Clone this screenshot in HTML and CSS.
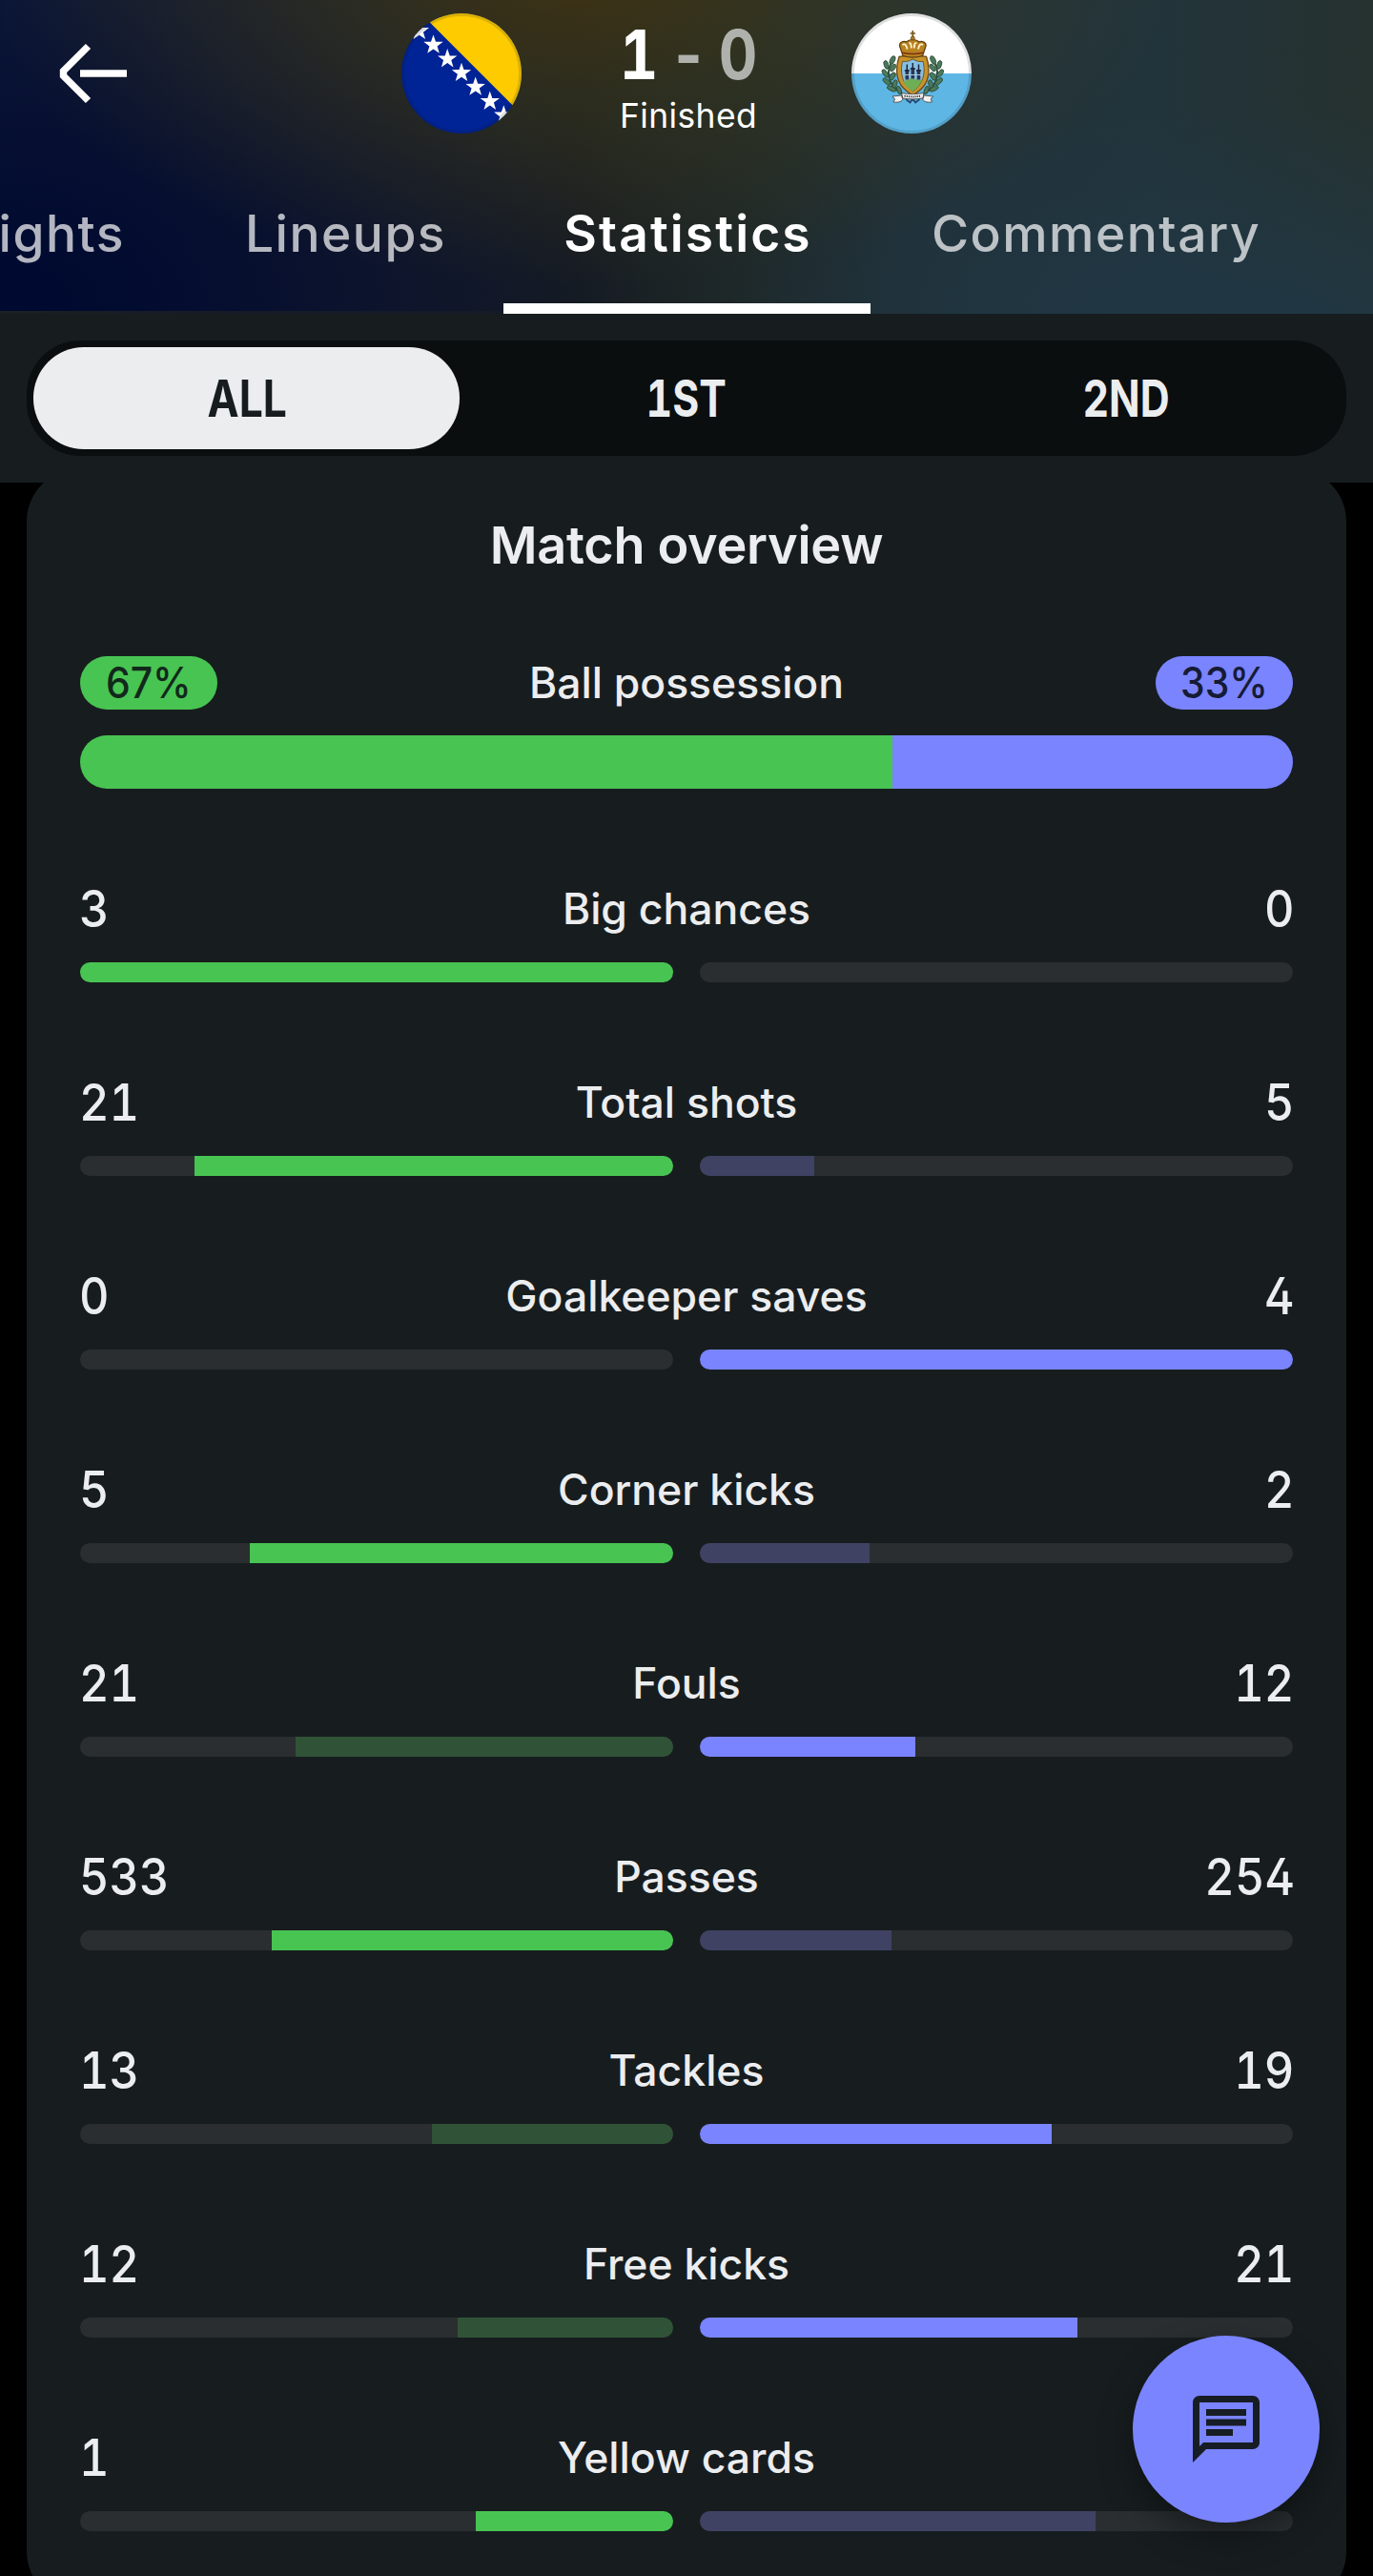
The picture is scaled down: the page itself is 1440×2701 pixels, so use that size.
FILE: index.html
```html
<!DOCTYPE html>
<html lang="en">
<head>
<meta charset="utf-8">
<title>Match statistics</title>
<link rel="stylesheet" href="styles.css">
</head>
<body>
<header class="header">
  <div class="scorebar">
    <svg class="back" viewBox="0 0 80 72" width="80" height="72" fill="none" stroke="#fff"><path d="M37.5 7.5 11.5 33.5v5l26 26" stroke-width="7.4"/><path d="M29 36h49" stroke-width="7.6"/></svg>
    <svg class="flag" viewBox="0 0 126 126">
      <defs>
        <clipPath id="disc"><circle cx="63" cy="63" r="63"/></clipPath>
        <path id="star" d="M0-10.6 2.5-3.3 10.2-3.2 4.1 1.4 6.3 8.7 0 4.4-6.3 8.7-4.1 1.4-10.2-3.2-2.5-3.3z" fill="#fff"/>
      </defs>
      <g clip-path="url(#disc)">
        <path d="M0 0h126v126H0z" fill="#002395"/>
        <path d="M20.3 0H126v105.7z" fill="#fecb00"/>
        <use href="#star" x="18.8" y="18.3"/><use href="#star" x="33.5" y="33"/><use href="#star" x="48.2" y="47.7"/><use href="#star" x="63" y="62.4"/><use href="#star" x="77.7" y="77.1"/><use href="#star" x="92.8" y="92.2"/><use href="#star" x="107.3" y="106.8"/>
      </g>
      <circle cx="63" cy="63" r="61.5" fill="none" stroke="#171d1f" stroke-opacity=".15" stroke-width="3"/>
    </svg>
    <div class="result">
      <div class="score"><span class="win">1</span><span class="dash">-</span><span>0</span></div>
      <div class="status">Finished</div>
    </div>
    <svg class="flag" viewBox="0 0 126 126">
      <g clip-path="url(#disc)">
        <path d="M0 0h126v63H0z" fill="#fff"/>
        <path d="M0 63h126v63H0z" fill="#5eb6e4"/>
      </g>
      <g fill="none" stroke="#31543e" stroke-width="2"><path d="M45 48c-9 9-9 27 8 36M84 48c9 9 9 27-8 36"/></g>
      <g fill="#4a7a5c" stroke="#2a4433" stroke-width=".8">
        <g id="wreath">
          <ellipse cx="43" cy="49" rx="2.4" ry="4.6" transform="rotate(25 43 49)"/>
          <ellipse cx="36.5" cy="54" rx="2.3" ry="4.6" transform="rotate(-18 36.5 54)"/>
          <ellipse cx="43.5" cy="57" rx="2.3" ry="4.4" transform="rotate(35 43.5 57)"/>
          <ellipse cx="35.5" cy="63" rx="2.3" ry="4.8" transform="rotate(-35 35.5 63)"/>
          <ellipse cx="43" cy="66" rx="2.4" ry="4.6" transform="rotate(30 43 66)"/>
          <ellipse cx="37" cy="71.5" rx="2.3" ry="4.8" transform="rotate(-50 37 71.5)"/>
          <ellipse cx="45.5" cy="74" rx="2.3" ry="4.4" transform="rotate(15 45.5 74)"/>
          <ellipse cx="42" cy="79" rx="2.2" ry="5" transform="rotate(-65 42 79)"/>
          <ellipse cx="50" cy="80.5" rx="2.2" ry="4.4" transform="rotate(-20 50 80.5)"/>
        </g>
        <use href="#wreath" transform="matrix(-1 0 0 1 128.6 0)"/>
      </g>
      <path d="M50 45.5c4-1 9 0 14.3-3 5.300 3 10.300 2 14.300 3 1.500 4 2.400 8 2.400 14 0 13-6 20-16.700 26.500C53.600 79.500 47.600 72.500 47.600 59.500c0-6 1-10 2.400-14z" fill="#c8932c" stroke="#6b4612" stroke-width="1.300"/>
      <path d="M53.500 50.500c4 .5 7-.5 10.800-2.500 3.800 2 6.800 3 10.800 2.500 1.500 6 1.500 13-.8 19-2 5-5.500 9-10 12.500-4.500-3.500-8-7.500-10-12.500-2.300-6-2.300-13-.8-19z" fill="#86bfe4" stroke="#5a4212" stroke-width=".8"/>
      <path d="M54 71.500c4-1.500 6-1.500 8-3.500 4 1 8 2 12.300 1.500-2 5-5.500 9-10 12.500-4.500-3-8-6.500-10.300-10.500z" fill="#6eae55"/>
      <path d="M56.500 59h3.600v10.500h-3.600zM62.500 57h3.600v11.500h-3.600zM68.700 59h3.600v10.500h-3.600z" fill="#2a3650"/>
      <path d="M55.800 60h5M61.800 58h5M68 60h5M58.300 53.500V60M64.300 52v6M70.500 53.500V60" stroke="#1c2438" stroke-width="1.500"/>
      <path d="M55.500 64.500h17.500" stroke="#a9cbe0" stroke-width="1"/>
      <path d="M54 44.500 50.500 34c-.5-4 4.500-5.500 7-4 2-2 4-2.500 6.800-2.500s4.800.5 6.800 2.500c2.500-1.500 7.500 0 7 4l-3.500 10.500c-6 1.800-14.600 1.800-20.600 0z" fill="#b98220" stroke="#5c3b0c" stroke-width="1.200"/>
      <path d="M53.500 33c2-1.500 4-.5 5 4.500M75 33c-2-1.500-4-.5-5 4.500M60.300 31.500c1.500-1.500 2.500 1 2.500 5M68.300 31.500c-1.500-1.500-2.500 1-2.500 5" fill="none" stroke="#fff3cf" stroke-width="1.800"/>
      <path d="M53.500 41.200c6 1.500 15.600 1.500 21.600 0" fill="none" stroke="#7a2f14" stroke-width="1.500"/>
      <path d="M64.300 18v9M61.600 21h5.400" stroke="#70521c" stroke-width="1.600"/><circle cx="64.300" cy="26" r="2" fill="#b07c1e" stroke="#5c3b0c" stroke-width=".7"/>
      <path d="m57 90 4.500 3.500 2.800-4 2.800 4 4.500-3.500" fill="none" stroke="#26466e" stroke-width="1.800"/>
      <path d="M53 83.500c7 1.500 15.600 1.500 22.600 0v5.300c-7 1.500-15.600 1.500-22.600 0zM53 86l-10 1 2.500 3-1.500 3c4 .5 8 .3 10-3zM75.600 86l10 1-2.500 3 1.500 3c-4 .5-8 .3-10-3z" fill="#f3f3f1" stroke="#4a4a48" stroke-width=".9"/>
      <path d="M55.500 86.500c6 1.200 11.600 1.200 17.600 0" fill="none" stroke="#3a3a3a" stroke-width="2" stroke-dasharray="1.200 1"/>
      <circle cx="63" cy="63" r="61.500" fill="none" stroke="#171d1f" stroke-opacity=".14" stroke-width="3"/>
    </svg>
  </div>
  <nav class="tabs">
    <a class="tab tab-highlights">Highlights</a>
    <a class="tab tab-lineups">Lineups</a>
    <a class="tab tab-statistics active">Statistics</a>
    <a class="tab tab-commentary">Commentary</a>
  </nav>
</header>

<div class="subheader">
  <div class="segments">
    <div class="segment selected"><span>ALL</span></div>
    <div class="segment"><span>1ST</span></div>
    <div class="segment"><span>2ND</span></div>
  </div>
</div>

<main class="card">
  <h2 class="title">Match overview</h2>
  <section class="possession">
    <div class="head"><span class="pill home"><b>67%</b></span><span class="label">Ball possession</span><span class="pill away"><b>33%</b></span></div>
    <div class="share"><i class="home" style="width:67%"></i><i class="away" style="width:33%"></i></div>
  </section>
  <section class="stat">
    <div class="head"><span class="value">3</span><span class="label">Big chances</span><span class="value">0</span></div>
    <div class="bars"><div class="track left"><i class="home" style="width:100%"></i></div><div class="track"></div></div>
  </section>
  <section class="stat">
    <div class="head"><span class="value">21</span><span class="label">Total shots</span><span class="value">5</span></div>
    <div class="bars"><div class="track left"><i class="home" style="width:80.77%"></i></div><div class="track"><i class="away dim" style="width:19.23%"></i></div></div>
  </section>
  <section class="stat">
    <div class="head"><span class="value">0</span><span class="label">Goalkeeper saves</span><span class="value">4</span></div>
    <div class="bars"><div class="track left"></div><div class="track"><i class="away" style="width:100%"></i></div></div>
  </section>
  <section class="stat">
    <div class="head"><span class="value">5</span><span class="label">Corner kicks</span><span class="value">2</span></div>
    <div class="bars"><div class="track left"><i class="home" style="width:71.43%"></i></div><div class="track"><i class="away dim" style="width:28.57%"></i></div></div>
  </section>
  <section class="stat">
    <div class="head"><span class="value">21</span><span class="label">Fouls</span><span class="value">12</span></div>
    <div class="bars"><div class="track left"><i class="home dim" style="width:63.64%"></i></div><div class="track"><i class="away" style="width:36.36%"></i></div></div>
  </section>
  <section class="stat">
    <div class="head"><span class="value">533</span><span class="label">Passes</span><span class="value">254</span></div>
    <div class="bars"><div class="track left"><i class="home" style="width:67.73%"></i></div><div class="track"><i class="away dim" style="width:32.27%"></i></div></div>
  </section>
  <section class="stat">
    <div class="head"><span class="value">13</span><span class="label">Tackles</span><span class="value">19</span></div>
    <div class="bars"><div class="track left"><i class="home dim" style="width:40.63%"></i></div><div class="track"><i class="away" style="width:59.37%"></i></div></div>
  </section>
  <section class="stat">
    <div class="head"><span class="value">12</span><span class="label">Free kicks</span><span class="value">21</span></div>
    <div class="bars"><div class="track left"><i class="home dim" style="width:36.36%"></i></div><div class="track"><i class="away" style="width:63.64%"></i></div></div>
  </section>
  <section class="stat">
    <div class="head"><span class="value">1</span><span class="label">Yellow cards</span><span class="value">2</span></div>
    <div class="bars"><div class="track left"><i class="home" style="width:33.33%"></i></div><div class="track"><i class="away dim" style="width:66.67%"></i></div></div>
  </section>
</main>

<button class="fab" aria-label="Chat">
  <svg viewBox="0 0 24 24" width="84" height="84" fill="#171d24"><path d="M4 4h16v12H5.170L4 17.170V4m0-2c-1.100 0-1.990.9-1.990 2L2 22l4-4h14c1.100 0 2-.9 2-2V4c0-1.100-.9-2-2-2H4zm2 10h8v2H6v-2zm0-3h12v2H6V9zm0-3h12v2H6V6z"/></svg>
</button>
</body>
</html>
```
FILE: styles.css
```css
* { box-sizing: border-box; }
html, body { height: 2701px; overflow: hidden; }
body {
  position: relative;
  margin: 0;
  background: #000;
  color: #ecedef;
  font-family: Inter, "Liberation Sans", sans-serif;
}

/* Header */
.header {
  position: relative;
  z-index: 2;
  height: 329px;
  overflow: hidden;
  background:
    linear-gradient(90deg, #1c2023, rgba(28, 32, 35, 0) 60%) bottom / 100% 3px no-repeat,
    radial-gradient(ellipse 620px 330px at 610px -30px, rgba(72, 56, 16, .8), rgba(64, 60, 26, .5) 40%, rgba(50, 50, 36, 0)),
    radial-gradient(ellipse 680px 460px at 0 329px, #000a30 10%, rgba(2, 11, 46, .7) 45%, rgba(8, 16, 44, 0)),
    radial-gradient(ellipse 600px 240px at 1340px 350px, rgba(31, 56, 72, .85), rgba(31, 54, 66, 0)),
    linear-gradient(90deg, #101c3c 0, #181e2e 22%, #181d22 42%, #1e2829 54%, #21323a 68%, #22343b 84%, #26322f 100%);
}
.scorebar {
  display: flex;
  align-items: center;
  height: 160px;
  padding: 0 0 6px 55px;
}
.back { margin-right: 286px; }
.flag { width: 126px; height: 126px; }
.result { width: 346px; padding: 12px 0 0 4px; }
.score {
  display: grid;
  grid-template-columns: 36px 62px 36px;
  column-gap: 3px;
  justify-content: center;
  height: 60px;
  color: #afb2ac;
  font-size: 71.500px;
  font-weight: 700;
  font-feature-settings: "tnum";
  line-height: 60px;
}
.score span { display: flex; justify-content: center; transform: scaleX(.88); }
.score .win { color: #fff; }
.status { margin-top: 17px; color: #fff; font-size: 35.400px; letter-spacing: .4px; line-height: 36px; text-align: center; }

.tabs { display: flex; height: 169px; margin-left: -205px; }
.tab {
  position: relative;
  flex: none;
  padding-left: 2px;
  color: rgba(255, 255, 255, .7);
  font-size: 53.300px;
  font-weight: 500;
  letter-spacing: 1.500px;
  line-height: 169px;
  text-align: center;
}
.tab-highlights { width: 400px; padding-right: 64px; text-align: right; }
.tab-lineups { width: 333px; }
.tab-statistics { width: 385px; }
.tab-commentary { width: 471px; }
.tab.active { color: #fff; font-weight: 600; letter-spacing: 2.100px; }
.tab.active::after { content: ""; position: absolute; left: 0; right: 0; bottom: 0; height: 11px; background: #fff; }

/* Period switch */
.subheader { position: relative; z-index: 2; height: 177px; padding: 28px; background: #171d1f; }
.segments {
  display: grid;
  grid-template-columns: repeat(3, 1fr);
  column-gap: 14px;
  height: 121px;
  padding: 7px;
  border-radius: 56px;
  background: #0a0e0f;
}
.segment { border-radius: 53px; font-size: 53.500px; font-weight: 700; font-feature-settings: "tnum"; line-height: 107px; text-align: center; }
.segment span { display: inline-block; transform: scaleX(.8); }
.segment.selected span { transform: translateX(1px) scaleX(.83); }
.selected { background: #ecedef; color: #171d1f; }

/* Card */
.card {
  height: 2240px;
  margin: -15px 28px 0;
  padding: 51px 56px 0;
  border-radius: 56px;
  background: #171d1f;
}
.title { margin: 0 0 86px; font-size: 54px; font-weight: 600; letter-spacing: -.3px; line-height: 60px; text-align: center; }
.head { display: grid; grid-template-columns: 1fr auto 1fr; align-items: center; height: 56px; }
.label { font-size: 44.500px; font-weight: 500; line-height: 56px; }
.head > :last-child { justify-self: end; }

.home { background: #48c452; }
.away { background: #7a84ff; }
.home.dim { background: #305337; }
.away.dim { background: #404263; }

.pill { display: flex; justify-content: center; width: 144px; height: 56px; border-radius: 28px; color: #12281b; font-size: 44.500px; line-height: 56px; }
.pill.away { color: #161b35; }
.pill b { font-weight: 550; transform: scaleX(.92); }
.share { display: flex; height: 56px; margin-top: 27px; overflow: hidden; border-radius: 28px; }

.stat { margin-top: 98px; }
.value { margin: 0 -1.500px; font-size: 53.500px; font-weight: 500; font-feature-settings: "tnum", "cv02"; line-height: 56px; transform: scaleX(.91); transform-origin: left; }
.value:last-child { transform-origin: right; }
.bars { display: grid; grid-template-columns: 1fr 1fr; column-gap: 28px; margin-top: 28px; }
.track { display: flex; height: 21px; overflow: hidden; border-radius: 10.500px; background: #2a2e30; }
.track.left { justify-content: flex-end; }

.fab {
  position: absolute;
  z-index: 3;
  left: 1188px;
  top: 2449px;
  display: grid;
  place-items: center;
  width: 196px;
  height: 196px;
  padding: 0;
  border: 0;
  border-radius: 50%;
  background: #7a84ff;
  box-shadow: 0 14px 36px rgba(0, 0, 0, .4);
}
```
